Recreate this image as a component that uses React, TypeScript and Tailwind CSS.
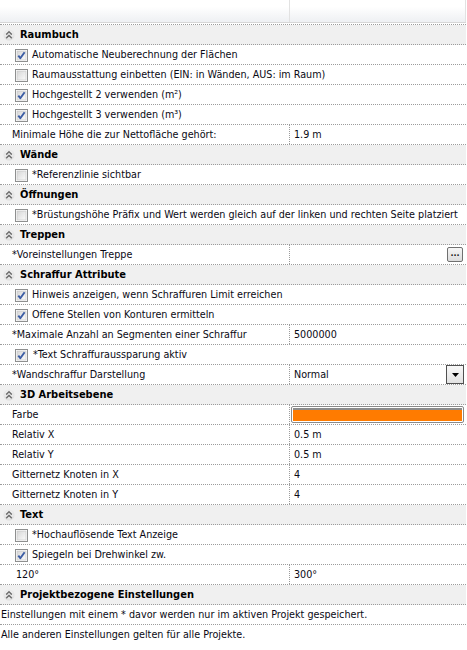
import React from "react";

type Row =
  | { t: "h"; label: string }
  | { t: "c"; label: string; checked: boolean; shift?: boolean }
  | { t: "p"; label: string; value?: string; extra?: "dots" | "drop" | "color"; indent?: boolean }
  | { t: "n"; label: string };

const rows: Row[] = [
  { t: "h", label: "Raumbuch" },
  { t: "c", label: "Automatische Neuberechnung der Flächen", checked: true },
  { t: "c", label: "Raumausstattung einbetten (EIN: in Wänden, AUS: im Raum)", checked: false },
  { t: "c", label: "Hochgestellt 2 verwenden (m²)", checked: true },
  { t: "c", label: "Hochgestellt 3 verwenden (m³)", checked: true },
  { t: "p", label: "Minimale Höhe die zur Nettofläche gehört:", value: "1.9 m" },
  { t: "h", label: "Wände" },
  { t: "c", label: "*Referenzlinie sichtbar", checked: false },
  { t: "h", label: "Öffnungen" },
  { t: "c", label: "*Brüstungshöhe Präfix und Wert werden gleich auf der linken und rechten Seite platziert", checked: false },
  { t: "h", label: "Treppen" },
  { t: "p", label: "*Voreinstellungen Treppe", value: "", extra: "dots" },
  { t: "h", label: "Schraffur Attribute" },
  { t: "c", label: "Hinweis anzeigen, wenn Schraffuren Limit erreichen", checked: true },
  { t: "c", label: "Offene Stellen von Konturen ermitteln", checked: true },
  { t: "p", label: "*Maximale Anzahl an Segmenten einer Schraffur", value: "5000000" },
  { t: "c", label: "*Text Schraffuraussparung aktiv", checked: true, shift: true },
  { t: "p", label: "*Wandschraffur Darstellung", value: "Normal", extra: "drop" },
  { t: "h", label: "3D Arbeitsebene" },
  { t: "p", label: "Farbe", extra: "color" },
  { t: "p", label: "Relativ X", value: "0.5 m" },
  { t: "p", label: "Relativ Y", value: "0.5 m" },
  { t: "p", label: "Gitternetz Knoten in X", value: "4" },
  { t: "p", label: "Gitternetz Knoten in Y", value: "4" },
  { t: "h", label: "Text" },
  { t: "c", label: "*Hochauflösende Text Anzeige", checked: false },
  { t: "c", label: "Spiegeln bei Drehwinkel zw.", checked: true },
  { t: "p", label: "120°", value: "300°", indent: true },
  { t: "h", label: "Projektbezogene Einstellungen" },
  { t: "n", label: "Einstellungen mit einem * davor werden nur im aktiven Projekt gespeichert." },
  { t: "n", label: "Alle anderen Einstellungen gelten für alle Projekte." },
];

function CollapseIcon() {
  return (
    <svg width="12" height="12" viewBox="0 0 12 12" className="shrink-0">
      <defs>
        <radialGradient id="cg" cx="50%" cy="40%" r="60%">
          <stop offset="0%" stopColor="#ffffff" />
          <stop offset="100%" stopColor="#dcdcdc" />
        </radialGradient>
      </defs>
      <circle cx="6" cy="6" r="5.5" fill="url(#cg)" />
      <polyline points="3.2,5.6 6,2.8 8.8,5.6" fill="none" stroke="#6f6f6f" strokeWidth="1.5" />
      <polyline points="3.2,9.2 6,6.4 8.8,9.2" fill="none" stroke="#6f6f6f" strokeWidth="1.5" />
    </svg>
  );
}

function Checkbox({ checked }: { checked: boolean }) {
  return (
    <svg width="13" height="13" viewBox="0 0 13 13" className="shrink-0">
      <defs>
        <linearGradient id="cbg" x1="0" y1="0" x2="1" y2="1">
          <stop offset="0%" stopColor="#d6d6d6" />
          <stop offset="100%" stopColor="#fbfbfb" />
        </linearGradient>
      </defs>
      <rect x="0.5" y="0.5" width="12" height="12" fill="#ffffff" stroke="#8e8f8f" />
      <rect x="2" y="2" width="9" height="9" fill="url(#cbg)" stroke="#c4c4c4" strokeWidth="0.6" />
      {checked && (
        <path d="M3.3 6.6 L5.3 9.2 L9.6 3.2" fill="none" stroke="#3c5da4" strokeWidth="1.9" strokeLinejoin="round" />
      )}
    </svg>
  );
}

function DotsButton() {
  return (
    <div className="absolute right-[3px] top-[2px] w-[16px] h-[15px] border border-[#707070] rounded-[2px] bg-gradient-to-b from-[#f6f6f6] to-[#dcdcdc] flex items-center justify-center">
      <span className="text-[9px] leading-none font-bold text-[#202020] -mt-[3px]">...</span>
    </div>
  );
}

function DropButton() {
  return (
    <div className="absolute right-[2px] top-0 w-[18px] h-[19px] border border-[#505050] bg-gradient-to-b from-[#f8f8f8] to-[#e2e2e2] flex items-center justify-center">
      <svg width="7" height="4" viewBox="0 0 7 4">
        <polygon points="0,0 7,0 3.5,4" fill="#000" />
      </svg>
    </div>
  );
}

function ColorField() {
  return (
    <div className="absolute left-[1px] right-[2px] top-[1px] h-[17px] border border-[#8a8a8a] rounded-[2px] bg-white p-[1px]">
      <div className="w-full h-full border-t-2 border-[#8c8c8c] bg-[#ff7b00]" />
    </div>
  );
}

export default function App() {
  return (
    <div
      className="w-[467px] h-[650px] bg-white text-[10.7px] text-[#0a0a14] overflow-hidden"
      style={{ fontFamily: '"DejaVu Sans Condensed", "Liberation Sans", sans-serif' }}
    >
      <div className="w-[466px] h-[23px] flex border-b border-[#d6d6d6] bg-gradient-to-b from-[#ffffff] from-30% to-[#eef0f3]">
        <div className="w-[290px] border-r border-[#e2e2e2]" />
        <div className="flex-1 border-r border-[#e2e2e2]" />
      </div>
      <div className="w-[466px] mt-px border-t border-dotted border-[#9c9c9c]">
        {rows.map((r, i) => {
          const last = i === rows.length - 1;
          if (r.t === "h") {
            return (
              <div key={i} className="h-[20px] flex items-center gap-[5px] pl-[3px] pt-px bg-[#f0f0f0] border-b border-dotted border-[#9c9c9c]">
                <CollapseIcon />
                <span className="font-bold text-black text-[11px]">{r.label}</span>
              </div>
            );
          }
          if (r.t === "c") {
            return (
              <div key={i} className="h-[20px] flex items-center gap-[4px] pl-[15px] pt-px border-b border-dotted border-[#9c9c9c] whitespace-nowrap">
                <Checkbox checked={r.checked} />
                <span className={r.shift ? "ml-[1px]" : ""}>{r.label}</span>
              </div>
            );
          }
          if (r.t === "n") {
            return (
              <div
                key={i}
                className={last ? "h-[20px] flex items-center pl-[1px] pt-px whitespace-nowrap" : "h-[20px] flex items-center pl-[1px] pt-px border-b border-dotted border-[#9c9c9c] whitespace-nowrap"}
              >
                {r.label}
              </div>
            );
          }
          return (
            <div key={i} className="h-[20px] flex border-b border-dotted border-[#9c9c9c]">
              <div
                className={
                  r.indent
                    ? "w-[290px] shrink-0 flex items-center pl-[16px] pt-px border-r border-dotted border-[#9c9c9c]"
                    : "w-[290px] shrink-0 flex items-center pl-[12px] pt-px border-r border-dotted border-[#9c9c9c]"
                }
              >
                {r.label}
              </div>
              <div className="relative flex-1 flex items-center pl-[4px] pt-px">
                {r.value}
                {r.extra === "dots" && <DotsButton />}
                {r.extra === "drop" && <DropButton />}
                {r.extra === "color" && <ColorField />}
              </div>
            </div>
          );
        })}
      </div>
    </div>
  );
}
